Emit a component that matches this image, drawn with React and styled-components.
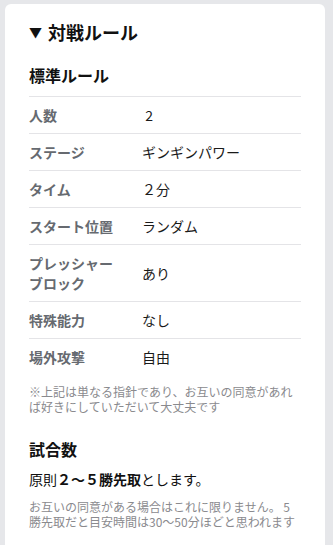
import React from 'react';
import styled, { createGlobalStyle } from 'styled-components';

const GlobalStyle = createGlobalStyle`
    html, body {
        margin: 0;
        padding: 0;
        background: #e6e7ea;
    }
    body {
        font-family: "Noto Sans CJK JP", "Noto Sans", "Liberation Sans", sans-serif;
        color: #1a1a1a;
    }
`

const rules = [
    { label: '人数', value: ' 2' },
    { label: 'ステージ', value: 'ギンギンパワー' },
    { label: 'タイム', value: '２分' },
    { label: 'スタート位置', value: 'ランダム' },
    { label: ['プレッシャー', 'ブロック'], value: 'あり' },
    { label: '特殊能力', value: 'なし' },
    { label: '場外攻撃', value: '自由' },
]

export default function App() {
    return (
        <Page>
            <GlobalStyle />
            <Card>
                <Heading>
                    <Caret>▼</Caret>対戦ルール
                </Heading>

                <SubHeading gap={17}>標準ルール</SubHeading>
                <RuleTable>
                    {rules.map((rule, i) => (
                        <Row key={i}>
                            <Label>
                                {Array.isArray(rule.label)
                                    ? rule.label.map(l => <div key={l}>{l}</div>)
                                    : rule.label}
                            </Label>
                            <Value>{rule.value}</Value>
                        </Row>
                    ))}
                </RuleTable>
                <Note gap={9}>※上記は単なる指針であり、お互いの同意があれば好きにしていただいて大丈夫です</Note>

                <SubHeading gap={23}>試合数</SubHeading>
                <Lead>
                    原則<strong>２～５勝先取</strong>とします。
                </Lead>
                <Note gap={10}>お互いの同意がある場合はこれに限りません。 5勝先取だと目安時間は30～50分ほどと思われます</Note>
            </Card>
        </Page>
    );
}

const Page = styled.div`
    padding: 4px 8px 0 5px;
    min-height: 545px;
    box-sizing: border-box;
`

const Card = styled.div`
    background: #fff;
    border-radius: 6px 6px 0 0;
    padding: 13px 24px 20px 24px;
    min-height: 541px;
    box-sizing: border-box;
`

const Heading = styled.div`
    display: flex;
    align-items: center;
    font-size: 18px;
    line-height: 28px;
    font-weight: 700;
    color: #111;
`

const Caret = styled.span`
    font-size: 13px;
    margin-right: 6px;
    margin-top: 1px;
`

const SubHeading = styled.div`
    margin-top: ${p => p.gap || 0}px;
    font-size: 16px;
    line-height: 24px;
    font-weight: 700;
    color: #111;
`

const RuleTable = styled.div`
    margin-top: 9px;
    display: flex;
    flex-direction: column;
`

const Row = styled.div`
    display: flex;
    align-items: center;
    border-top: 1px solid #e4e4e7;
    padding: 8px 0;
`

const Label = styled.div`
    width: 113px;
    flex-shrink: 0;
    font-size: 14px;
    line-height: 20px;
    font-weight: 700;
    color: #666a70;
`

const Value = styled.div`
    font-size: 14px;
    line-height: 20px;
    color: #1a1a1a;
    white-space: pre;
`

const Note = styled.p`
    margin: ${p => p.gap || 0}px 0 0 0;
    font-size: 12px;
    line-height: 15px;
    color: #8a8a8e;
`

const Lead = styled.p`
    margin: 8px 0 0 0;
    font-size: 14px;
    line-height: 20px;
    color: #111;

    strong {
        font-weight: 700;
    }
`
